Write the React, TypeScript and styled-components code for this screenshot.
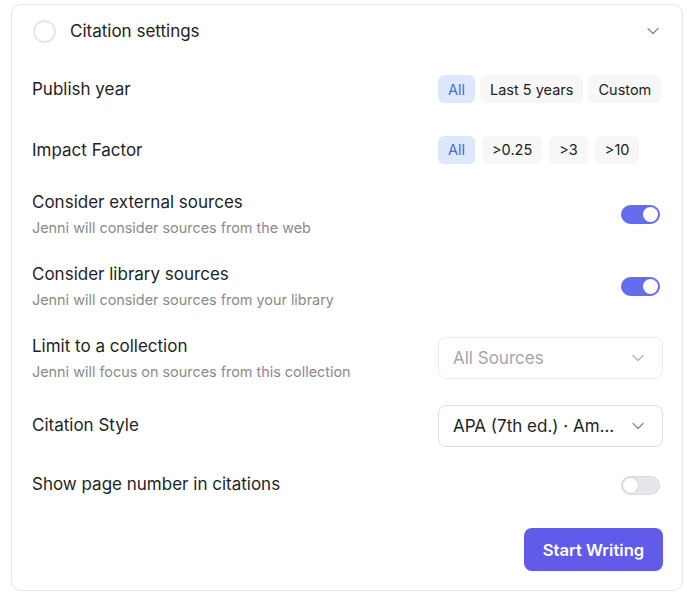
import React from 'react';
import styled, { createGlobalStyle } from 'styled-components';

const GlobalStyle = createGlobalStyle`
  * {
    box-sizing: border-box;
    margin: 0;
    padding: 0;
  }

  body {
    font-family: 'Inter', 'Noto Sans', sans-serif;
    -webkit-font-smoothing: antialiased;
    background-color: #ffffff;
    color: #1f1f1f;
  }
`;

const Page = styled.div`
  padding: 4px 0 0 11px;
  width: 683px;
`;

const Card = styled.div`
  width: 672px;
  height: 587px;
  border: 1px solid #e6e6e6;
  border-radius: 10px;
  background: #fff;
  padding: 0 19px 0 20px;
  display: flex;
  flex-direction: column;
`;

const Header = styled.div`
  height: 52px;
  display: flex;
  align-items: center;
  padding-left: 1px;
`;

const Circle = styled.div`
  width: 23px;
  height: 23px;
  border-radius: 50%;
  border: 2px solid #e8e8e8;
  flex-shrink: 0;
`;

const HeaderTitle = styled.span`
  flex: 1;
  margin-left: 14px;
  font-size: 17px;
  color: #222;
`;

const HeaderChevron = styled.div`
  width: 16px;
  height: 16px;
  margin-right: 2px;
  display: flex;
  align-items: center;
  justify-content: center;
`;

const Row = styled.div<{ $h: number }>`
  height: ${(p) => p.$h}px;
  display: flex;
  align-items: center;
`;

const LabelBlock = styled.div`
  flex: 1;
  display: flex;
  flex-direction: column;
  gap: 4px;
`;

const Label = styled.div<{ $lift?: boolean }>`
  font-size: 17px;
  line-height: 24px;
  color: #1f1f1f;
  margin-top: ${(p) => (p.$lift ? '-3px' : '0')};
`;

const Desc = styled.div`
  font-size: 14.4px;
  line-height: 20px;
  color: #8a8a8a;
`;

const Control = styled.div<{ $end?: boolean }>`
  width: 225px;
  flex-shrink: 0;
  display: flex;
  align-items: center;
  justify-content: ${(p) => (p.$end ? 'flex-end' : 'flex-start')};
`;

const ChipGroup = styled.div<{ $gap: number }>`
  display: flex;
  gap: ${(p) => p.$gap}px;
`;

const Chip = styled.button<{ $active?: boolean }>`
  height: 28px;
  padding: 0 10px;
  border: none;
  border-radius: 6px;
  font-family: inherit;
  font-size: 14.5px;
  background: ${(p) => (p.$active ? '#dde8fc' : '#f7f7f7')};
  color: ${(p) => (p.$active ? '#3d6de0' : '#222')};
  white-space: nowrap;
`;

const Toggle = styled.div<{ $on?: boolean }>`
  position: relative;
  width: 39px;
  height: 19px;
  margin-right: 3px;
  border-radius: 10px;
  background: ${(p) => (p.$on ? '#636ced' : '#e6e7eb')};
  border: 1px solid ${(p) => (p.$on ? '#636ced' : '#d8dadf')};
`;

const Knob = styled.div<{ $on?: boolean }>`
  position: absolute;
  top: 1px;
  ${(p) => (p.$on ? 'right: 1px;' : 'left: 1px;')}
  width: 15px;
  height: 15px;
  border-radius: 50%;
  background: #fff;
  box-shadow: ${(p) => (p.$on ? 'none' : '0 0 0 1px #d4d6db')};
`;

const Select = styled.div<{ $muted?: boolean }>`
  width: 225px;
  height: 42px;
  border: 1px solid ${(p) => (p.$muted ? '#ececec' : '#dcdcdc')};
  border-radius: 8px;
  display: flex;
  align-items: center;
  padding: 0 18px 0 14px;
  font-size: 17px;
  color: ${(p) => (p.$muted ? '#a6a6a6' : '#1f1f1f')};
`;

const SelectText = styled.span`
  flex: 1;
  white-space: nowrap;
  overflow: hidden;
`;

const Footer = styled.div`
  padding-top: 16px;
  display: flex;
  justify-content: flex-end;
`;

const PrimaryButton = styled.button`
  height: 43px;
  width: 139px;
  border: none;
  border-radius: 8px;
  background: #625ae9;
  color: #fff;
  font-family: inherit;
  font-size: 16.6px;
  font-weight: 600;
`;

const Chevron: React.FC<{ color: string }> = ({ color }) => (
  <svg width="12" height="8" viewBox="0 0 12 8" fill="none">
    <path d="M1 1.5L6 6.5L11 1.5" stroke={color} strokeWidth="1.3" strokeLinecap="round" strokeLinejoin="round" />
  </svg>
);

const Switch: React.FC<{ on?: boolean }> = ({ on }) => (
  <Toggle $on={on}>
    <Knob $on={on} />
  </Toggle>
);

export default function App() {
  return (
    <>
      <GlobalStyle />
      <Page>
        <Card>
          <Header>
            <Circle />
            <HeaderTitle>Citation settings</HeaderTitle>
            <HeaderChevron>
              <Chevron color="#8a8a8a" />
            </HeaderChevron>
          </Header>

          <Row $h={64}>
            <LabelBlock>
              <Label>Publish year</Label>
            </LabelBlock>
            <Control>
              <ChipGroup $gap={5}>
                <Chip $active>All</Chip>
                <Chip>Last 5 years</Chip>
                <Chip>Custom</Chip>
              </ChipGroup>
            </Control>
          </Row>

          <Row $h={57}>
            <LabelBlock>
              <Label>Impact Factor</Label>
            </LabelBlock>
            <Control>
              <ChipGroup $gap={7}>
                <Chip $active>All</Chip>
                <Chip>&gt;0.25</Chip>
                <Chip>&gt;3</Chip>
                <Chip>&gt;10</Chip>
              </ChipGroup>
            </Control>
          </Row>

          <Row $h={72}>
            <LabelBlock>
              <Label>Consider external sources</Label>
              <Desc>Jenni will consider sources from the web</Desc>
            </LabelBlock>
            <Control $end>
              <Switch on />
            </Control>
          </Row>

          <Row $h={72}>
            <LabelBlock>
              <Label>Consider library sources</Label>
              <Desc>Jenni will consider sources from your library</Desc>
            </LabelBlock>
            <Control $end>
              <Switch on />
            </Control>
          </Row>

          <Row $h={72}>
            <LabelBlock>
              <Label>Limit to a collection</Label>
              <Desc>Jenni will focus on sources from this collection</Desc>
            </LabelBlock>
            <Select $muted>
              <SelectText>All Sources</SelectText>
              <Chevron color="#b5b5b5" />
            </Select>
          </Row>

          <Row $h={64}>
            <LabelBlock>
              <Label $lift>Citation Style</Label>
            </LabelBlock>
            <Select>
              <SelectText>APA (7th ed.) · Am...</SelectText>
              <Chevron color="#8a8a8a" />
            </Select>
          </Row>

          <Row $h={54}>
            <LabelBlock>
              <Label $lift>Show page number in citations</Label>
            </LabelBlock>
            <Control $end>
              <Switch />
            </Control>
          </Row>

          <Footer>
            <PrimaryButton>Start Writing</PrimaryButton>
          </Footer>
        </Card>
      </Page>
    </>
  );
}
